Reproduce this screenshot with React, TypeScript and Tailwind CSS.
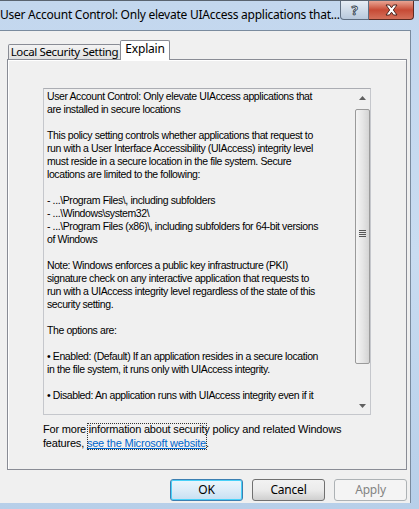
import React from 'react';

const lines = [
  'User Account Control: Only elevate UIAccess applications that',
  'are installed in secure locations',
  '',
  'This policy setting controls whether applications that request to',
  'run with a User Interface Accessibility (UIAccess) integrity level',
  'must reside in a secure location in the file system. Secure',
  'locations are limited to the following:',
  '',
  '- ...\\Program Files\\, including subfolders',
  '- ...\\Windows\\system32\\',
  '- ...\\Program Files (x86)\\, including subfolders for 64-bit versions',
  'of Windows',
  '',
  'Note: Windows enforces a public key infrastructure (PKI)',
  'signature check on any interactive application that requests to',
  'run with a UIAccess integrity level regardless of the state of this',
  'security setting.',
  '',
  'The options are:',
  '',
  '\u2022 Enabled: (Default) If an application resides in a secure location',
  'in the file system, it runs only with UIAccess integrity.',
  '',
  '\u2022 Disabled: An application runs with UIAccess integrity even if it',
];

const bodyFont = { fontFamily: '"Liberation Sans", Arial, sans-serif' };

function Scrollbar() {
  return (
    <div className="w-[16px] h-full flex flex-col items-center bg-[#f0f0f0]">
      <div className="h-[17px] w-full flex items-center justify-center">
        <svg width="7" height="4" viewBox="0 0 7 4">
          <path d="M0 4 L3.5 0 L7 4 Z" fill="#606060" />
        </svg>
      </div>
      <div className="mt-[3px] h-[255px] w-[15px] rounded-[2px] border border-[#9a9a9a] bg-gradient-to-r from-[#f4f4f4] via-[#e6e6e6] to-[#d4d4d4] flex items-center justify-center">
        <div className="flex flex-col gap-[1px] -mt-[6px]">
          <div className="w-[7px] h-[1px] bg-[#555]" />
          <div className="w-[7px] h-[1px] bg-[#555]" />
          <div className="w-[7px] h-[1px] bg-[#555]" />
          <div className="w-[7px] h-[1px] bg-[#555]" />
        </div>
      </div>
      <div className="flex-1" />
      <div className="h-[17px] w-full flex items-center justify-center">
        <svg width="7" height="4" viewBox="0 0 7 4">
          <path d="M0 0 L7 0 L3.5 4 Z" fill="#606060" />
        </svg>
      </div>
    </div>
  );
}

function Btn({ label, disabled, focused }: { label: string; disabled?: boolean; focused?: boolean }) {
  return (
    <div
      className={
        'w-[73px] h-[22px] rounded-[3px] flex items-center justify-center text-[12px] tracking-[-0.2px] ' +
        (disabled
          ? 'border border-[#adb2b5] bg-[#f4f4f4] text-[#838383]'
          : focused
          ? 'border border-[#3c7fb1] bg-gradient-to-b from-[#eaf6fd] via-[#dcecf8] to-[#c6dff2] text-black shadow-[inset_0_0_0_1px_#48d1f9]'
          : 'border border-[#707070] bg-gradient-to-b from-[#f2f2f2] via-[#ebebeb] to-[#cfcfcf] text-black')
      }
    >
      {label}
    </div>
  );
}

export default function App() {
  return (
    <div
      className="w-[419px] h-[509px] flex flex-col overflow-hidden border-t border-[#5a6470] bg-gradient-to-b from-[#c3d7ee] via-[#c9dcf1] to-[#b7cfe9]"
      style={{ fontFamily: '"Noto Sans", sans-serif' }}
    >
      {/* title bar */}
      <div className="h-[29px] flex items-start">
        <div className="pt-[5px] text-[12px] text-black whitespace-nowrap tracking-[-0.25px]">
          User Account Control: Only elevate UIAccess applications that...
        </div>
        <div className="flex-1" />
        <div className="flex mr-[5px]">
          <div className="w-[29px] h-[19px] rounded-bl-[4px] border border-t-0 border-[#5f6f82] bg-gradient-to-b from-[#e6edf5] via-[#cfdbe8] to-[#b8c9dc] flex items-center justify-center">
            <span className="text-[13px] font-bold leading-none text-white [-webkit-text-stroke:0.8px_#2c3a4a]">?</span>
          </div>
          <div className="w-[45px] h-[19px] rounded-br-[4px] border border-t-0 border-l-0 border-[#5c2b22] bg-gradient-to-b from-[#e8a493] via-[#c74a35] to-[#d4705a] flex items-center justify-center">
            <svg width="15" height="12" viewBox="0 0 15 12">
              <path d="M2 1 L5.5 1 L7.5 3.8 L9.5 1 L13 1 L9.3 6 L13 11 L9.5 11 L7.5 8.2 L5.5 11 L2 11 L5.7 6 Z" fill="#fff" stroke="#3b1a14" strokeWidth="0.9" />
            </svg>
          </div>
        </div>
      </div>

      {/* client area */}
      <div className="flex-1 mr-[8px] mb-[6px] bg-[#f0f0f0] border-t border-r border-[#7a8b9e] flex flex-col">
        {/* tabs */}
        <div className="flex items-end pl-[8px] pt-[8px] h-[28px]">
          <div className="h-[15px] w-[113px] border border-b-0 border-[#898c95] rounded-t-[2px] bg-gradient-to-b from-[#f3f3f3] to-[#e0e0e0] flex items-center justify-center text-[11.5px] leading-none whitespace-nowrap tracking-[-0.35px]">
            Local Security Setting
          </div>
          <div className="h-[20px] w-[50px] -ml-[1px] border border-b-0 border-[#898c95] rounded-t-[2px] bg-white flex items-start justify-center pt-[2px] text-[12px] leading-none tracking-[-0.2px] relative -mb-[1px] z-10">
            Explain
          </div>
        </div>

        {/* panel */}
        <div className="ml-[7px] w-[400px] h-[411px] border border-[#898c95] bg-[#f0f0f0] shadow-[inset_1px_1px_0_#ffffff] pt-[28px] pl-[35px] relative">
          <div className="w-[328px] h-[327px] border border-[#c5c7cc] border-t-[#abadb3] flex">
            <div
              className="flex-1 pl-[3px] pt-[1px] text-[10.5px] leading-[13px] tracking-[-0.4px] text-black overflow-hidden"
              style={bodyFont}
            >
              {lines.map((l, i) => (
                <div key={i} className="h-[13px] whitespace-nowrap">
                  {l}
                </div>
              ))}
            </div>
            <Scrollbar />
          </div>
          <div
            className="mt-[7px] text-[11px] leading-[14px] tracking-[-0.2px] text-black whitespace-nowrap"
            style={bodyFont}
          >
            <div>For more information about security policy and related Windows</div>
            <div>
              features,{' '}
              <span className="text-[#0066cc] underline">see the Microsoft website</span>.
            </div>
          </div>
          <div className="absolute left-[79px] top-[363px] w-[120px] h-[27px] border border-dotted border-[#333]" />
        </div>

        {/* buttons */}
        <div className="flex justify-end gap-[9px] pt-[9px] pr-[3px]">
          <Btn label="OK" focused />
          <Btn label="Cancel" />
          <Btn label="Apply" disabled />
        </div>
      </div>
    </div>
  );
}
